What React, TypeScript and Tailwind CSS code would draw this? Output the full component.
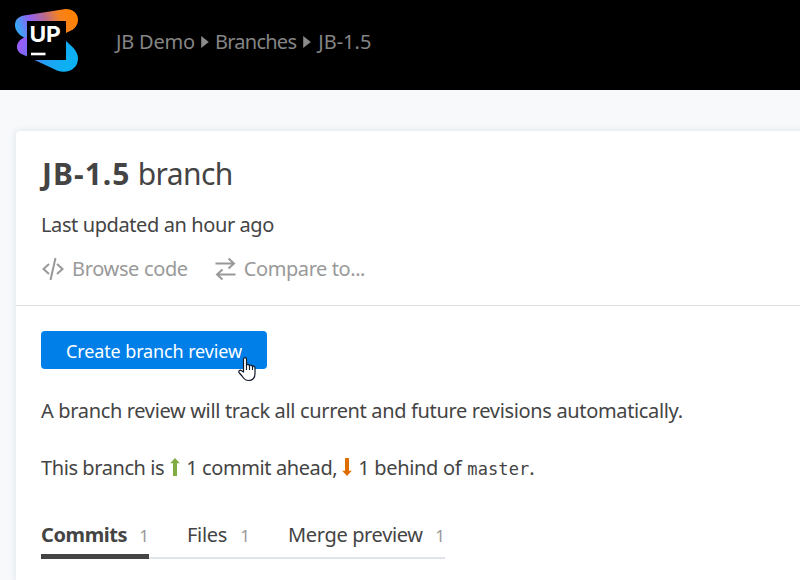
import React from 'react';

function Logo() {
  return (
    <svg width="64" height="64" viewBox="0 0 64 64" className="block shrink-0">
      <defs>
        <linearGradient id="top" x1="6" y1="28" x2="60" y2="8" gradientUnits="userSpaceOnUse">
          <stop offset="0" stopColor="#3aa5f5" />
          <stop offset="0.25" stopColor="#9062f5" />
          <stop offset="0.5" stopColor="#b9698f" />
          <stop offset="0.75" stopColor="#f58220" />
          <stop offset="1" stopColor="#ff8100" />
        </linearGradient>
        <linearGradient id="bottom" x1="4" y1="36" x2="50" y2="56" gradientUnits="userSpaceOnUse">
          <stop offset="0" stopColor="#9a5cf8" />
          <stop offset="0.25" stopColor="#756df8" />
          <stop offset="0.6" stopColor="#239ff3" />
          <stop offset="1" stopColor="#0db0f2" />
        </linearGradient>
      </defs>
      <path d="M9 6.500 49 .2C57 -.7 63 4 63 11c0 4-2 7-5 9.500L51 24 14 32 5 26C1 22 0 19 0 16 0 11 3 7.500 9 6.500Z" fill="url(#top)" />
      <path d="M12 28C6 29 2 33 2 38c0 4 3 7 8 8.500L42 61.500c11 4 21-2 21-12 0-4-2-8-5-11L50 31Z" fill="url(#bottom)" />
      <path d="M12 12h39v39H12z" fill="#000" />
      <path d="M16 45h14.500" stroke="#fff" strokeWidth="2.600" />
      <text x="14.400" y="33.300" textLength="31.500" lengthAdjust="spacingAndGlyphs" fontSize="22" fontWeight="700" fill="#fff" fontFamily="Inter, sans-serif">UP</text>
    </svg>
  );
}

function Caret() {
  return (
    <svg width="8" height="14" viewBox="0 0 8 14" className="ml-[6px] mr-[7px] shrink-0">
      <path d="M.2 1v12L7.800 7z" fill="#8b8b8b" />
    </svg>
  );
}

function Commit({ down = false }: { down?: boolean }) {
  return (
    <svg width="10" height="18" viewBox="0 0 10 18" className={down ? 'relative -top-px mr-[6px] rotate-180' : 'relative -top-px mr-[6px]'}>
      <path d="M5 0 9.800 5.200H7V18H3V5.200H.200Z" fill={down ? '#de6d00' : '#82ab42'} />
    </svg>
  );
}

export default function App() {
  return (
    <div className="flex h-[580px] w-[800px] flex-col overflow-hidden bg-[#f7f9fb] font-['Noto_Sans','Open_Sans',sans-serif] text-[20px] text-[#444444]">
      <header className="flex h-[90px] shrink-0 items-start bg-black pl-[15px] pt-[9px]">
        <Logo />
        <nav className="ml-[37px] mt-[18px] flex h-[30px] items-center whitespace-nowrap leading-[30px] text-[#858585]">
          <span className="tracking-[-0.2px]">JB Demo</span>
          <Caret />
          <span className="-ml-px mr-px tracking-[-0.75px]">Branches</span>
          <Caret />
          <span className="tracking-[0px]">JB-1.5</span>
        </nav>
      </header>
      <main className="ml-[16px] mt-[41px] flex-1 rounded-tl-[4px] bg-white shadow-[0_0_5px_2px_#e7ecf0]">
        <div className="h-[175px] border-b border-[#dfe1e3] pl-[25px] pt-[22px]">
          <h1 className="h-[42px] whitespace-nowrap pl-px text-[30px] leading-[42px]">
            <b className="tracking-[1.05px]">JB-1.5</b>
            <span className="tracking-[-0.6px]"> branch</span>
          </h1>
          <p className="mt-[15px] h-[30px] whitespace-nowrap leading-[30px] tracking-[-0.4px]">Last updated an hour ago</p>
          <div className="mt-[14px] flex h-[30px] items-center whitespace-nowrap leading-[30px] text-[#999999]">
            <svg width="24" height="24" viewBox="0 0 24 24" className="mr-[7px]" fill="none" stroke="#999" strokeWidth="2">
              <path d="m8 7-5.500 5 5.500 5m8-10 5.500 5-5.500 5M14.500 1 9.500 23" />
            </svg>
            <span className="tracking-[-0.35px]">Browse code</span>
            <svg width="22" height="24" viewBox="0 0 22 24" className="ml-[27px] mr-[7px]" fill="none" stroke="#999" strokeWidth="2">
              <path d="M.5 6.500h19M13.500 1.500l5.500 5-5.500 5M20.500 17.500H2M7.500 12.500l-5.500 5 5.500 5" />
            </svg>
            <span className="tracking-[-0.42px]">Compare to...</span>
          </div>
        </div>
        <div className="pl-[25px] pt-[25px]">
          <div className="relative h-[38px] w-[226px]">
            <button className="h-[38px] w-[226px] whitespace-nowrap rounded-[4px] bg-[#007fe8] pl-[25px] pt-[2px] text-left text-[18px] leading-[36px] tracking-[-0.12px] text-white">Create branch review</button>
            <svg width="20" height="26" viewBox="0 0 20 26" className="absolute left-[196px] top-[25px]">
              <path d="M6.500 16V3.500c0-2.500 3-2.500 3 0V10c0-2.500 3-2 3 .5 0-2 3-2 3 .8 0-2 2.500-1.500 2.500.9v5c0 4-2 7.300-6.500 7.300-3 0-5-2-6.500-4.500L2 16.500c-1-2 1.200-3 2.600-1.700Z" fill="#fff" stroke="#111827" strokeWidth="1.200" strokeLinejoin="round" />
              <path d="M9.500 9v5m3-4v4m3-3v3" stroke="#111827" strokeWidth="1.100" />
            </svg>
          </div>
          <p className="mt-[27px] h-[30px] whitespace-nowrap leading-[30px] tracking-[-0.345px]">A branch review will track all current and future revisions automatically.</p>
          <p className="mt-[27px] flex h-[30px] items-center whitespace-nowrap leading-[30px]">
            <span className="mr-[6px] tracking-[-0.42px]">This branch is</span>
            <Commit />
            <span className="mr-[5px] tracking-[-0.4px]">1 commit ahead,</span>
            <Commit down />
            <span className="mr-[6px] tracking-[-0.32px]">1 behind of</span>
            <code className="relative top-px font-['DejaVu_Sans_Mono',monospace] text-[17px] tracking-[0.1px]">master</code>.
          </p>
          <div className="mt-[36px] flex h-[40px] w-[404px] whitespace-nowrap border-b-2 border-[#dfe5eb] leading-[32px]">
            <div className="relative w-[108px]">
              <b className="tracking-[-0.4px]">Commits</b>
              <span className="absolute right-0 top-px text-[17px] text-[#999]">1</span>
              <i className="absolute left-0 top-[35px] h-[5px] w-[108px] bg-[#444]" />
            </div>
            <div className="relative ml-[38px] w-[63px]">
              <span className="tracking-[-0.3px]">Files</span>
              <span className="absolute right-0 top-px text-[17px] text-[#999]">1</span>
            </div>
            <div className="relative ml-[38px] w-[157px]">
              <span className="tracking-[-0.35px]">Merge preview</span>
              <span className="absolute right-0 top-px text-[17px] text-[#999]">1</span>
            </div>
          </div>
        </div>
      </main>
    </div>
  );
}
